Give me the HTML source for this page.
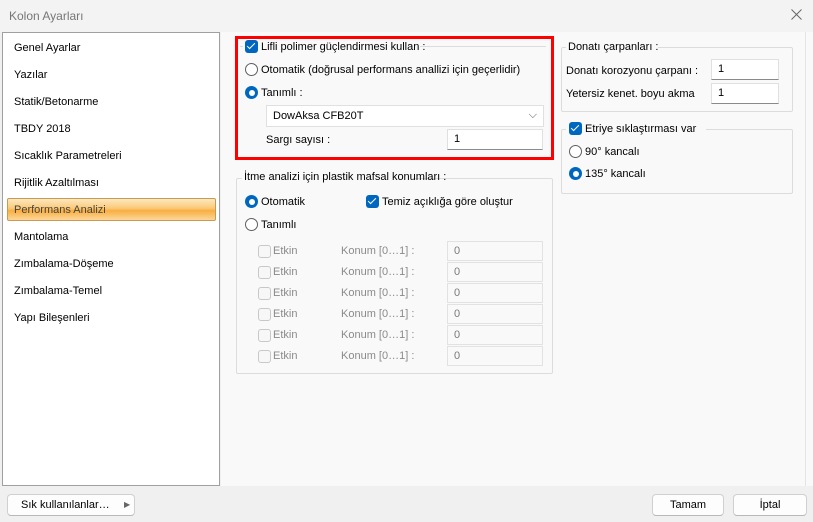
<!DOCTYPE html>
<html><head><meta charset="utf-8"><style>
*{box-sizing:border-box;margin:0;padding:0}
body{width:813px;height:522px;background:#f0f0f0;font-family:"Liberation Sans","DejaVu Sans",sans-serif;font-size:11px;color:#000;position:relative;overflow:hidden}
.a{position:absolute}
.t{position:absolute;white-space:nowrap}
.cb{position:absolute;width:13px;height:13px;border-radius:3px;background:#0067c0}
.cb::after{content:"";position:absolute;left:4px;top:1px;width:3px;height:7px;border:solid #fff;border-width:0 1.5px 1.5px 0;transform:rotate(45deg)}
.cbo{position:absolute;width:13px;height:13px;border-radius:3px;border:1px solid #c8c8c8;background:#f7f7f7}
.r{position:absolute;width:13px;height:13px;border-radius:50%;border:1px solid #5f5f5f;background:#fff}
.rs{position:absolute;width:13px;height:13px;border-radius:50%;background:#0067c0}
.rs::after{content:"";position:absolute;left:3.5px;top:3.5px;width:6px;height:6px;border-radius:50%;background:#fff}
.in{position:absolute;background:#fff;border:1px solid #e0e0e0;border-bottom:1px solid #8a8a8a;padding-left:6px;line-height:18px;font-size:11px}
.ind{position:absolute;background:#f9f9f9;border:1px solid #e2e2e2;padding-left:6px;line-height:18px;color:#7a7a7a}
.fs{position:absolute;border:1px solid #dcdcdc;border-radius:2px}
.g{color:#8a8a8a}
.btn{position:absolute;background:#fdfdfd;border:1px solid #d0d0d0;border-bottom-color:#b8b8b8;border-radius:4px;text-align:center;line-height:20px}
</style></head><body>
<div class="a" style="left:0;top:0;width:813px;height:32px;background:#f3f3f3"></div>
<div class="t" style="left:9px;top:9px;font-size:12px;color:#777">Kolon Ayarları</div>
<svg class="a" style="left:791px;top:9px" width="11" height="11"><path d="M0.5 0.5L10.5 10.5M10.5 0.5L0.5 10.5" stroke="#666" stroke-width="1"/></svg>
<div class="a" style="left:221px;top:32px;width:592px;height:454px;background:#f9f9f9"></div>
<div class="a" style="left:2px;top:32px;width:218px;height:454px;background:#fff;border:1px solid #a0a0a0"></div>
<div class="a" style="left:7px;top:198px;width:209px;height:23px;border:1px solid #c79b54;border-radius:2px;background:linear-gradient(#fde8c0,#fbc875 45%,#f9ae3f 55%,#fcd79a)"></div>
<div class="t" style="left:14px;top:42px">Genel Ayarlar</div>
<div class="t" style="left:14px;top:69px">Yazılar</div>
<div class="t" style="left:14px;top:96px">Statik/Betonarme</div>
<div class="t" style="left:14px;top:123px">TBDY 2018</div>
<div class="t" style="left:14px;top:150px">Sıcaklık Parametreleri</div>
<div class="t" style="left:14px;top:177px">Rijitlik Azaltılması</div>
<div class="t" style="left:14px;top:204px;color:#444">Performans Analizi</div>
<div class="t" style="left:14px;top:231px">Mantolama</div>
<div class="t" style="left:14px;top:258px">Zımbalama-Döşeme</div>
<div class="t" style="left:14px;top:285px">Zımbalama-Temel</div>
<div class="t" style="left:14px;top:312px">Yapı Bileşenleri</div>

<!-- red box -->
<div class="a" style="left:240px;top:46px;width:306px;height:1px;background:#dcdcdc"></div>
<div class="a" style="left:235px;top:36px;width:319px;height:124px;border:3px solid #f00"></div>
<div class="a" style="left:243px;top:40px;width:177px;height:14px;background:#f9f9f9"></div>
<div class="cb" style="left:245px;top:40px"></div>
<div class="t" style="left:261px;top:41px">Lifli polimer güçlendirmesi kullan :</div>
<div class="r" style="left:245px;top:63px"></div>
<div class="t" style="left:261px;top:64px">Otomatik (doğrusal performans anallizi için geçerlidir)</div>
<div class="rs" style="left:245px;top:86px"></div>
<div class="t" style="left:261px;top:87px">Tanımlı :</div>
<div class="in" style="left:266px;top:105px;width:278px;height:22px;border-bottom-color:#e0e0e0;line-height:20px">DowAksa CFB20T<span style="position:absolute;right:6px;top:-1px;color:#555">⌵</span></div>
<div class="t" style="left:266px;top:134px">Sargı sayısı :</div>
<div class="in" style="left:447px;top:129px;width:96px;height:21px">1</div>

<!-- itme -->
<div class="fs" style="left:236px;top:178px;width:317px;height:196px"></div>
<div class="a" style="left:242px;top:170px;width:172px;height:14px;background:#f9f9f9"></div>
<div class="t" style="left:244px;top:171px">İtme analizi için plastik mafsal konumları :</div>
<div class="rs" style="left:245px;top:195px"></div>
<div class="t" style="left:261px;top:196px">Otomatik</div>
<div class="cb" style="left:366px;top:195px"></div>
<div class="t" style="left:382px;top:196px">Temiz açıklığa göre oluştur</div>
<div class="r" style="left:245px;top:218px"></div>
<div class="t" style="left:261px;top:219px">Tanımlı</div>
<div class="cbo" style="left:258px;top:245px"></div><div class="t g" style="left:273px;top:245px">Etkin</div><div class="t g" style="left:341px;top:245px">Konum [0…1] :</div><div class="ind" style="left:447px;top:241px;width:96px;height:20px">0</div>
<div class="cbo" style="left:258px;top:266px"></div><div class="t g" style="left:273px;top:266px">Etkin</div><div class="t g" style="left:341px;top:266px">Konum [0…1] :</div><div class="ind" style="left:447px;top:262px;width:96px;height:20px">0</div>
<div class="cbo" style="left:258px;top:287px"></div><div class="t g" style="left:273px;top:287px">Etkin</div><div class="t g" style="left:341px;top:287px">Konum [0…1] :</div><div class="ind" style="left:447px;top:283px;width:96px;height:20px">0</div>
<div class="cbo" style="left:258px;top:308px"></div><div class="t g" style="left:273px;top:308px">Etkin</div><div class="t g" style="left:341px;top:308px">Konum [0…1] :</div><div class="ind" style="left:447px;top:304px;width:96px;height:20px">0</div>
<div class="cbo" style="left:258px;top:329px"></div><div class="t g" style="left:273px;top:329px">Etkin</div><div class="t g" style="left:341px;top:329px">Konum [0…1] :</div><div class="ind" style="left:447px;top:325px;width:96px;height:20px">0</div>
<div class="cbo" style="left:258px;top:350px"></div><div class="t g" style="left:273px;top:350px">Etkin</div><div class="t g" style="left:341px;top:350px">Konum [0…1] :</div><div class="ind" style="left:447px;top:346px;width:96px;height:20px">0</div>

<!-- right -->
<div class="fs" style="left:561px;top:47px;width:232px;height:65px"></div>
<div class="a" style="left:566px;top:40px;width:92px;height:14px;background:#f9f9f9"></div>
<div class="t" style="left:568px;top:41px">Donatı çarpanları :</div>
<div class="t" style="left:566px;top:65px">Donatı korozyonu çarpanı :</div>
<div class="in" style="left:711px;top:59px;width:68px;height:21px">1</div>
<div class="t" style="left:566px;top:88px">Yetersiz kenet. boyu akma</div>
<div class="in" style="left:711px;top:83px;width:68px;height:21px">1</div>
<div class="fs" style="left:561px;top:129px;width:232px;height:65px"></div>
<div class="a" style="left:566px;top:122px;width:140px;height:14px;background:#f9f9f9"></div>
<div class="cb" style="left:569px;top:122px"></div>
<div class="t" style="left:585px;top:123px">Etriye sıklaştırması var</div>
<div class="r" style="left:569px;top:145px"></div>
<div class="t" style="left:585px;top:146px">90° kancalı</div>
<div class="rs" style="left:569px;top:167px"></div>
<div class="t" style="left:585px;top:168px">135° kancalı</div>
<div class="a" style="left:805px;top:32px;width:1px;height:454px;background:#e4e4e4"></div>

<!-- bottom -->
<div class="btn" style="left:7px;top:494px;width:128px;height:22px;text-align:left;padding-left:13px">Sık kullanılanlar…<span style="position:absolute;left:116px;top:0;font-size:8px;color:#666">▶</span></div>
<div class="btn" style="left:652px;top:494px;width:72px;height:22px">Tamam</div>
<div class="btn" style="left:733px;top:494px;width:74px;height:22px">İptal</div>
</body></html>
